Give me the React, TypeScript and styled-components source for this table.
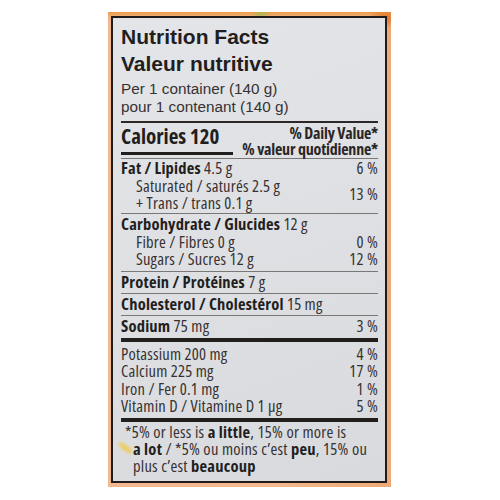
import React from "react";
import styled, { createGlobalStyle } from "styled-components";

const GlobalStyle = createGlobalStyle`
  html, body {
    margin: 0;
    padding: 0;
    background: #ffffff;
  }
  body {
    font-family: "Open Sans", "Liberation Sans", Arial, sans-serif;
    font-stretch: 75%;
    color: #2a2626;
  }
`;

const Page = styled.div`
  width: 500px;
  height: 500px;
  box-sizing: border-box;
  padding: 12px 0 0 108px;
`;

const Frame = styled.div`
  width: 283px;
  box-sizing: border-box;
  padding: 4px 4px 4px 3px;
  background:
    radial-gradient(ellipse 10px 5px at 153px 2px, #a9b94f 0%, rgba(169, 185, 79, 0) 100%),
    radial-gradient(ellipse 18px 10px at 278px 6px, #de7426 0%, rgba(222, 116, 38, 0) 100%),
    linear-gradient(180deg, #ec9c48 0px, #f1b07e 5px, rgba(241, 176, 126, 0) 9px),
    linear-gradient(90deg, #f3b890 0%, #f2b88e 60%, #eeaa76 100%);
`;

const Label = styled.div`
  border: 2px solid #1f1b1b;
  background: linear-gradient(160deg, #e4e5e8 0%, #dedfe2 55%, #d9dade 100%);
  padding: 5px 7px 6.5px 8px;
`;

const Title = styled.div`
  font-family: "Liberation Sans", Arial, sans-serif;
  font-stretch: normal;
  font-weight: bold;
  font-size: 21px;
  line-height: 27px;
  color: #221e1e;
  white-space: nowrap;
`;

const Serving = styled.div`
  margin-top: 2.5px;
  padding-bottom: 5.5px;
  border-bottom: 2px solid #2c2828;
  font-family: "Liberation Sans", Arial, sans-serif;
  font-stretch: normal;
  font-size: 15.3px;
  line-height: 18px;
  color: #363232;
  white-space: nowrap;
`;

const CaloriesRow = styled.div`
  display: flex;
  justify-content: space-between;
  align-items: flex-start;
  padding: 2px 0 1px;
  border-bottom: 1px solid #7a7777;
`;

const CaloriesLeft = styled.div`
  display: flex;
  flex-direction: column;
`;

const CaloriesText = styled.div`
  font-weight: bold;
  font-size: 21px;
  line-height: 22px;
  color: #221e1e;
  white-space: nowrap;
`;

const CaloriesBar = styled.div`
  width: 112px;
  height: 3px;
  margin-top: 5px;
  background: #221e1e;
`;

const DailyValue = styled.div`
  text-align: right;
  font-weight: bold;
  font-size: 16px;
  line-height: 16px;
  letter-spacing: -0.2px;
  color: #2a2626;
  white-space: nowrap;
`;

type RuleKind = "thin" | "thick" | "none";

const Section = styled.div<{ $pt: number; $pb: number; $rule: RuleKind }>`
  padding-top: ${(p) => p.$pt}px;
  padding-bottom: ${(p) => p.$pb}px;
  border-bottom: ${(p) =>
    p.$rule === "thick" ? "4px solid #221e1e" : p.$rule === "thin" ? "1px solid #7a7777" : "none"};
`;

const Row = styled.div<{ $indent?: boolean }>`
  display: flex;
  justify-content: space-between;
  padding-left: ${(p) => (p.$indent ? 15 : 0)}px;
  font-size: 16.5px;
  line-height: 17.5px;
  letter-spacing: 0.2px;
  color: #363232;
  white-space: nowrap;
`;

const GroupRow = styled.div`
  display: grid;
  grid-template-columns: 1fr auto;
  align-items: center;
  font-size: 16.5px;
  line-height: 17.5px;
  letter-spacing: 0.2px;
  color: #363232;
`;

const SubLine = styled.div`
  padding-left: 15px;
  white-space: nowrap;
`;

const B = styled.b`
  font-weight: bold;
  color: #221e1e;
`;

const Pct = styled.span`
  text-align: right;
  white-space: nowrap;
`;

const Footnote = styled.div`
  position: relative;
  padding: 1.5px 0 0 12px;
  text-indent: -8px;
  font-size: 16.5px;
  line-height: 17px;
  letter-spacing: 0.25px;
  color: #363232;
  white-space: nowrap;
`;

const Smudge = styled.span`
  position: absolute;
  left: -4px;
  top: 23px;
  width: 17px;
  height: 6px;
  border-radius: 50%;
  background: rgba(240, 200, 60, 0.75);
  filter: blur(1.5px);
  transform: rotate(38deg);
  pointer-events: none;
`;

const App = () => {
  return (
    <Page>
      <GlobalStyle />
      <Frame>
        <Label>
          <Title>Nutrition Facts</Title>
          <Title>Valeur nutritive</Title>
          <Serving>
            Per 1 container (140 g)
            <br />
            pour 1 contenant (140 g)
          </Serving>

          <CaloriesRow>
            <CaloriesLeft>
              <CaloriesText>Calories 120</CaloriesText>
              <CaloriesBar />
            </CaloriesLeft>
            <DailyValue>
              % Daily Value*
              <br />% valeur quotidienne*
            </DailyValue>
          </CaloriesRow>

          <Section $pt={0} $pb={1.5} $rule="thin">
            <Row>
              <span>
                <B>Fat / Lipides</B> 4.5 g
              </span>
              <Pct>6 %</Pct>
            </Row>
            <GroupRow>
              <div>
                <SubLine>Saturated / saturés 2.5 g</SubLine>
                <SubLine>+ Trans / trans 0.1 g</SubLine>
              </div>
              <Pct>13 %</Pct>
            </GroupRow>
          </Section>

          <Section $pt={1} $pb={3.5} $rule="thin">
            <Row>
              <span>
                <B>Carbohydrate / Glucides</B> 12 g
              </span>
            </Row>
            <Row $indent>
              <span>Fibre / Fibres 0 g</span>
              <Pct>0 %</Pct>
            </Row>
            <Row $indent>
              <span>Sugars / Sucres 12 g</span>
              <Pct>12 %</Pct>
            </Row>
          </Section>

          <Section $pt={1} $pb={2.5} $rule="thin">
            <Row>
              <span>
                <B>Protein / Protéines</B> 7 g
              </span>
            </Row>
          </Section>

          <Section $pt={1} $pb={2.5} $rule="thin">
            <Row>
              <span>
                <B>Cholesterol / Cholestérol</B> 15 mg
              </span>
            </Row>
          </Section>

          <Section $pt={1} $pb={3} $rule="thick">
            <Row>
              <span>
                <B>Sodium</B> 75 mg
              </span>
              <Pct>3 %</Pct>
            </Row>
          </Section>

          <Section $pt={3} $pb={3} $rule="thick">
            <Row>
              <span>Potassium 200 mg</span>
              <Pct>4 %</Pct>
            </Row>
            <Row>
              <span>Calcium 225 mg</span>
              <Pct>17 %</Pct>
            </Row>
            <Row>
              <span>Iron / Fer 0.1 mg</span>
              <Pct>1 %</Pct>
            </Row>
            <Row>
              <span>Vitamin D / Vitamine D 1 µg</span>
              <Pct>5 %</Pct>
            </Row>
          </Section>

          <Footnote>
            <Smudge />
            *5% or less is <B>a little</B>, 15% or more is
            <br />
            <B>a lot</B> / *5% ou moins c’est <B>peu</B>, 15% ou
            <br />
            plus c’est <B>beaucoup</B>
          </Footnote>
        </Label>
      </Frame>
    </Page>
  );
};

export default App;
